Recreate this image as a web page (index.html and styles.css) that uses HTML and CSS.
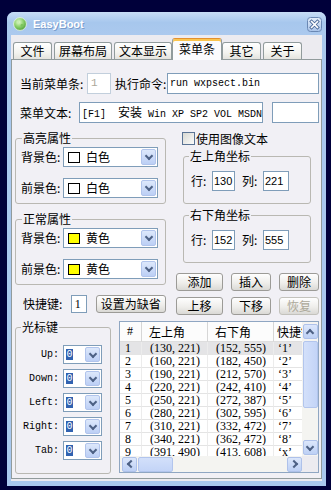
FILE: index.html
```html
<!DOCTYPE html>
<html lang="zh-CN">
<head>
  <meta charset="UTF-8" />
  <meta name="viewport" content="width=device-width, initial-scale=1.0"/>
  <title>EasyBoot</title>
  <link rel="stylesheet" href="styles.css">
</head>
<body>
  <div class="window">
    <div class="titlebar">
      <svg class="app-icon" width="14" height="14" viewBox="0 0 14 14">
        <defs>
          <radialGradient id="ball" cx="40%" cy="35%" r="70%">
            <stop offset="0" stop-color="#e2f8cf"/>
            <stop offset="0.5" stop-color="#8fd36f"/>
            <stop offset="1" stop-color="#4a9c34"/>
          </radialGradient>
        </defs>
        <circle cx="7" cy="7" r="6.4" fill="url(#ball)" stroke="#eef7e6" stroke-width="0.8"/>
        <circle cx="5" cy="5" r="1.2" fill="#c7eeb0"/>
        <circle cx="9" cy="8.5" r="1.4" fill="#7cc35c"/>
      </svg>
      <span class="title">EasyBoot</span>
      <svg class="close-btn" width="15" height="15" viewBox="0 0 15 15">
        <defs>
          <linearGradient id="closeBg" x1="0" y1="0" x2="0" y2="1">
            <stop offset="0" stop-color="#e6effb"/>
            <stop offset="1" stop-color="#a8c3e9"/>
          </linearGradient>
        </defs>
        <rect x="0.5" y="0.5" width="14" height="14" rx="3" fill="url(#closeBg)" stroke="#6a88b4"/>
        <path d="M4.6 4.6 L10.4 10.4 M10.4 4.6 L4.6 10.4" stroke="#4b6a98" stroke-width="3.4" stroke-linecap="square"/>
        <path d="M4.6 4.6 L10.4 10.4 M10.4 4.6 L4.6 10.4" stroke="#fff" stroke-width="1.6" stroke-linecap="square"/>
      </svg>
    </div>

    <div class="client">
      <div class="tabs">
        <div class="tab">文件</div>
        <div class="tab">屏幕布局</div>
        <div class="tab">文本显示</div>
        <div class="tab active">菜单条</div>
        <div class="tab">其它</div>
        <div class="tab">关于</div>
      </div>

      <div class="panel">
        <div class="field-row">
          <span class="lbl lbl-current">当前菜单条:</span>
          <div class="edit edit-index">1</div>
          <span class="lbl lbl-cmd">执行命令:</span>
          <div class="edit mono edit-cmd">run wxpsect.bin</div>
        </div>
        <div class="field-row">
          <span class="lbl lbl-text">菜单文本:</span>
          <div class="edit mono edit-text">[F1]  <span class="cjk">安装</span> Win XP SP2 VOL MSDN</div>
          <div class="edit edit-extra"></div>
        </div>

        <div class="middle">
          <div class="col-left">
            <fieldset class="group attr">
              <legend>高亮属性</legend>
              <div class="attr-row">
                <span class="lbl">背景色:</span>
                <div class="combo"><span class="swatch"></span><span class="combo-text">白色</span><span class="drop"></span></div>
              </div>
              <div class="attr-row">
                <span class="lbl">前景色:</span>
                <div class="combo"><span class="swatch"></span><span class="combo-text">白色</span><span class="drop"></span></div>
              </div>
            </fieldset>
            <fieldset class="group attr">
              <legend>正常属性</legend>
              <div class="attr-row">
                <span class="lbl">背景色:</span>
                <div class="combo"><span class="swatch yellow"></span><span class="combo-text">黄色</span><span class="drop"></span></div>
              </div>
              <div class="attr-row">
                <span class="lbl">前景色:</span>
                <div class="combo"><span class="swatch yellow"></span><span class="combo-text">黄色</span><span class="drop"></span></div>
              </div>
            </fieldset>
            <div class="hotkey-row">
              <span class="lbl">快捷键:</span>
              <div class="edit edit-hotkey">1</div>
              <button class="btn btn-default">设置为缺省</button>
            </div>
          </div>

          <div class="col-right">
            <div class="check-row"><span class="checkbox"></span>使用图像文本</div>
            <fieldset class="group coords">
              <legend>左上角坐标</legend>
              <div class="coord-row">
                <span class="lbl">行:</span><div class="edit num">130</div>
                <span class="lbl lbl-col">列:</span><div class="edit num wide">221</div>
              </div>
            </fieldset>
            <fieldset class="group coords">
              <legend>右下角坐标</legend>
              <div class="coord-row">
                <span class="lbl">行:</span><div class="edit num">152</div>
                <span class="lbl lbl-col">列:</span><div class="edit num wide">555</div>
              </div>
            </fieldset>
            <div class="btn-grid">
              <button class="btn">添加</button>
              <button class="btn">插入</button>
              <button class="btn">删除</button>
              <button class="btn">上移</button>
              <button class="btn">下移</button>
              <button class="btn" disabled>恢复</button>
            </div>
          </div>
        </div>

        <div class="bottom">
          <fieldset class="group cursor-keys">
            <legend>光标键</legend>
            <div class="key-row"><span class="key-lbl">Up:</span><div class="combo small"><span class="key-sel">0</span><span class="drop"></span></div></div>
            <div class="key-row"><span class="key-lbl">Down:</span><div class="combo small"><span class="key-sel">0</span><span class="drop"></span></div></div>
            <div class="key-row"><span class="key-lbl">Left:</span><div class="combo small"><span class="key-sel">0</span><span class="drop"></span></div></div>
            <div class="key-row"><span class="key-lbl">Right:</span><div class="combo small"><span class="key-sel">0</span><span class="drop"></span></div></div>
            <div class="key-row"><span class="key-lbl">Tab:</span><div class="combo small"><span class="key-sel">0</span><span class="drop"></span></div></div>
          </fieldset>

          <div class="list">
            <div class="list-view">
              <div class="lv-row lv-head"><span>#</span><span>左上角</span><span>右下角</span><span>快捷键</span></div>
              <div class="lv-row sel"><span>1</span><span>(130, 221)</span><span>(152, 555)</span><span>‘1’</span></div>
              <div class="lv-row"><span>2</span><span>(160, 221)</span><span>(182, 450)</span><span>‘2’</span></div>
              <div class="lv-row"><span>3</span><span>(190, 221)</span><span>(212, 570)</span><span>‘3’</span></div>
              <div class="lv-row"><span>4</span><span>(220, 221)</span><span>(242, 410)</span><span>‘4’</span></div>
              <div class="lv-row"><span>5</span><span>(250, 221)</span><span>(272, 387)</span><span>‘5’</span></div>
              <div class="lv-row"><span>6</span><span>(280, 221)</span><span>(302, 595)</span><span>‘6’</span></div>
              <div class="lv-row"><span>7</span><span>(310, 221)</span><span>(332, 472)</span><span>‘7’</span></div>
              <div class="lv-row"><span>8</span><span>(340, 221)</span><span>(362, 472)</span><span>‘8’</span></div>
              <div class="lv-row"><span>9</span><span>(391, 490)</span><span>(413, 608)</span><span>‘x’</span></div>
            </div>
            <div class="vscroll">
              <span class="sb-btn up"></span>
              <span class="sb-thumb v"></span>
              <span class="sb-space"></span>
              <span class="sb-btn down"></span>
            </div>
            <div class="hscroll">
              <span class="sb-btn left"></span>
              <span class="sb-thumb h"></span>
              <span class="sb-space"></span>
              <span class="sb-btn right"></span>
            </div>
            <div class="corner"></div>
          </div>
        </div>
      </div>
    </div>
  </div>
</body>
</html>
```

FILE: styles.css
```css
body {
  margin: 0;
  background: #00003a;
  font: 12px/14px "Noto Sans CJK SC", sans-serif;
  color: #000;
}
.window {
  margin: 12px 0 0 7px;
  width: 319px;
  height: 474px;
  box-sizing: border-box;
  padding: 0 4px 5px;
  background: #a9c8ee;
  border-radius: 7px 7px 0 0;
  display: flex;
  flex-direction: column;
}
.titlebar {
  height: 23px;
  margin: 0 -4px;
  padding: 0 4px 0 6px;
  display: flex;
  align-items: center;
  border-radius: 7px 7px 0 0;
  background: linear-gradient(#c8ddf6, #a7c7ed 45%, #abc9ee);
}
.app-icon {
  margin-top: 1px;
}
.title {
  margin-left: 6px;
  font: bold 11px "Liberation Sans", sans-serif;
  color: #fff;
  text-shadow: 1px 1px 0 rgba(60, 100, 160, 0.45);
}
.close-btn {
  margin-left: auto;
  margin-top: 2px;
}
.client {
  flex: 1;
  padding-top: 7px;
  background: #ecebf0;
}

/* tabs */
.tabs {
  display: flex;
  align-items: flex-end;
  gap: 2px;
  height: 17px;
  padding-left: 2px;
  position: relative;
  z-index: 1;
}
.tab {
  height: 17px;
  min-width: 39px;
  box-sizing: border-box;
  padding: 0 4px;
  border: 1px solid #919b9c;
  border-bottom: none;
  border-radius: 3px 3px 0 0;
  background: linear-gradient(#fff, #f3f3ef 60%, #e4e3de);
  text-align: center;
  line-height: 16px;
}
.tab.active {
  height: 22px;
  margin: 0 -2px -1px;
  padding: 0 6px;
  line-height: 19px;
  border-top-color: #e3912f;
  box-shadow: inset 0 2px 0 #fbc54e;
  background: #fbfbfd;
}
.panel {
  height: 420px;
  box-sizing: border-box;
  padding: 13px 2px 0 3px;
  border: 1px solid #919b9c;
  background: #f1f0f5;
}

/* edits */
.lbl {
  white-space: nowrap;
}
.edit {
  box-sizing: border-box;
  height: 21px;
  border: 1px solid #7f9db9;
  background: #fff;
  white-space: pre;
  overflow: hidden;
}
.mono {
  padding-left: 2px;
  font: 10px/19px "Liberation Mono", monospace;
}
.cjk {
  font: 12px "Noto Sans CJK SC", sans-serif;
}
.field-row {
  display: flex;
  align-items: center;
  height: 21px;
  padding-left: 5px;
}
.field-row + .field-row {
  margin-top: 8px;
}
.lbl-current {
  width: 66px;
}
.edit-index {
  width: 24px;
  margin-left: 1px;
  padding-left: 3px;
  border-color: #c2cfdc;
  color: #aca899;
  font: 11px/19px "Liberation Mono", monospace;
}
.lbl-cmd {
  width: 52px;
  margin-left: 4px;
}
.edit-cmd {
  flex: 1;
}
.lbl-text {
  width: 59px;
}
.edit-text {
  width: 184px;
}
.edit-extra {
  width: 47px;
  margin-left: 9px;
}

/* group boxes */
.middle {
  display: flex;
  gap: 10px;
  margin-top: 9px;
}
.col-left {
  width: 151px;
}
.col-right {
  width: 143px;
}
.group {
  margin: 0;
  min-width: 0;
  box-sizing: border-box;
  border: 1px solid #b9b8b2;
  border-radius: 3px;
}
.group legend {
  padding: 0 1px;
  margin-left: 1px;
  font-size: 12px;
  line-height: 12px;
}
.attr {
  padding: 3px 7px 5px 5px;
}
.attr + .attr {
  margin-top: 9px;
}
.attr-row {
  display: flex;
  align-items: center;
  height: 20px;
}
.attr-row + .attr-row {
  margin-top: 11px;
}
.attr-row .lbl {
  width: 42px;
}

/* combo boxes */
.combo {
  display: flex;
  align-items: center;
  width: 95px;
  height: 20px;
  box-sizing: border-box;
  border: 1px solid #7f9db9;
  background: #fff;
}
.swatch {
  width: 12px;
  height: 11px;
  box-sizing: border-box;
  margin-left: 4px;
  border: 1px solid #000;
  background: #fff;
}
.swatch.yellow {
  background: #ffff00;
}
.combo-text {
  margin-left: 6px;
}
.drop {
  margin-left: auto;
  margin-right: 1px;
  width: 15px;
  height: 16px;
  box-sizing: border-box;
  border: 1px solid #b1c4ec;
  border-radius: 2px;
  background: linear-gradient(#dde8fb, #bccff5);
  display: flex;
  align-items: center;
  justify-content: center;
}
.drop::after {
  content: "";
  width: 4px;
  height: 4px;
  border: solid #4d6185;
  border-width: 0 2px 2px 0;
  transform: translateY(-1px) rotate(45deg);
}
.combo.small {
  width: 39px;
  height: 19px;
  margin-left: 4px;
}
.combo.small .drop {
  height: 15px;
}
.key-sel {
  margin-left: 2px;
  width: 7px;
  height: 11px;
  background: #3162b0;
  color: #fff;
  font: 10px/11px "Liberation Mono", monospace;
  text-align: center;
}

/* hotkey + buttons */
.hotkey-row {
  display: flex;
  align-items: center;
  height: 18px;
  margin-top: 10px;
  padding-left: 8px;
}
.hotkey-row .lbl {
  width: 48px;
}
.edit-hotkey {
  width: 16px;
  height: 18px;
  padding-left: 3px;
  font: 12px/16px "Liberation Serif", serif;
}
.btn {
  height: 18px;
  box-sizing: border-box;
  padding: 0;
  border: 1px solid #9c9b97;
  border-radius: 3px;
  background: linear-gradient(#fefefe, #efeeeb 55%, #dad9d5);
  color: #000;
  font: 12px/16px "Noto Sans CJK SC", sans-serif;
}
.btn:disabled {
  color: #aca899;
  border-color: #c3c2bc;
}
.btn-default {
  width: 71px;
  margin-left: 9px;
}

/* right column */
.check-row {
  display: flex;
  align-items: center;
  gap: 1px;
  height: 13px;
  margin-left: 6px;
}
.checkbox {
  width: 13px;
  height: 13px;
  box-sizing: border-box;
  border: 1px solid #5a7394;
  background: linear-gradient(135deg, #d8d8d2, #fbfbfa);
}
.coords {
  margin: 5px 8px 0 7px;
  padding: 9px 0 12px 7px;
}
.coords legend {
  margin-left: -2px;
}
.coord-row {
  display: flex;
  align-items: center;
  height: 20px;
}
.coord-row .lbl {
  width: 18px;
}
.coord-row .lbl-col {
  margin-left: 7px;
}
.num {
  width: 23px;
  height: 20px;
  margin-left: 3px;
  padding-left: 1px;
  font: 11px/18px "Liberation Sans", sans-serif;
}
.num.wide {
  width: 26px;
}
.btn-grid {
  display: grid;
  grid-template-columns: 47px 40px 40px;
  column-gap: 8px;
  row-gap: 6px;
  margin-top: 10px;
}

/* bottom */
.bottom {
  display: flex;
  align-items: flex-start;
  gap: 8px;
  margin-top: 6px;
}
.cursor-keys {
  width: 96px;
  padding: 12px 0 13px 0;
}
.cursor-keys legend {
  margin-left: 5px;
}
.key-row {
  display: flex;
  align-items: center;
  height: 19px;
}
.key-row + .key-row {
  margin-top: 5px;
}
.key-lbl {
  width: 43px;
  text-align: right;
  font: 10px "Liberation Mono", monospace;
}

/* list view */
.list {
  width: 200px;
  height: 152px;
  box-sizing: border-box;
  border: 1px solid #8fa6c2;
  background: #fff;
  display: grid;
  grid-template-columns: 1fr 16px;
  grid-template-rows: 1fr 16px;
}
.list-view {
  overflow: hidden;
}
.lv-row {
  display: grid;
  grid-template-columns: 22px 66px 66px 60px;
  width: 214px;
  height: 13px;
  font: 12px/12px "Liberation Serif", serif;
}
.lv-row > span {
  box-sizing: border-box;
  overflow: hidden;
  white-space: nowrap;
  border-right: 1px solid #ececec;
  border-bottom: 1px solid #e4e4e4;
}
.lv-row > span:nth-child(1) {
  padding-left: 5px;
}
.lv-row > span:nth-child(2),
.lv-row > span:nth-child(3) {
  padding-left: 8px;
}
.lv-row > span:nth-child(4) {
  padding-left: 4px;
}
.lv-head {
  height: 20px;
  font: 12px/19px "Noto Sans CJK SC", sans-serif;
}
.lv-head > span {
  padding-left: 7px;
  background: #fcfcfc;
  border-right-color: #d6d6d6;
  border-bottom-color: #dedede;
}
.lv-head > span:first-child {
  font: 12px/19px "Liberation Serif", serif;
  padding-left: 7px;
}
.lv-head > span:nth-child(2),
.lv-head > span:nth-child(3) {
  padding-left: 7px;
}
.lv-head > span:nth-child(4) {
  padding-left: 3px;
}
.lv-row.sel > span {
  background: #e4e4e6;
}

/* scroll bars */
.vscroll,
.hscroll {
  display: flex;
  background: #f4f4f1;
}
.vscroll {
  flex-direction: column;
  align-items: center;
}
.hscroll {
  align-items: center;
}
.sb-space {
  flex: 1;
}
.sb-btn {
  width: 15px;
  height: 15px;
  box-sizing: border-box;
  border: 1px solid #aec1ea;
  border-radius: 2px;
  background: linear-gradient(#dce7fb, #bdd0f5);
  display: flex;
  align-items: center;
  justify-content: center;
}
.sb-btn::after {
  content: "";
  width: 4px;
  height: 4px;
  border: solid #4d6185;
  border-width: 0 2px 2px 0;
}
.sb-btn.up {
  margin-top: 2px;
}
.sb-btn.up::after {
  transform: translateY(1px) rotate(-135deg);
}
.sb-btn.down {
  margin-bottom: 1px;
}
.sb-btn.down::after {
  transform: translateY(-1px) rotate(45deg);
}
.sb-btn.left {
  margin-left: 2px;
}
.sb-btn.left::after {
  transform: translateX(1px) rotate(135deg);
}
.sb-btn.right::after {
  transform: translateX(-1px) rotate(-45deg);
}
.sb-thumb {
  box-sizing: border-box;
  border: 1px solid #b2c5ed;
  border-radius: 2px;
}
.sb-thumb.v {
  width: 15px;
  height: 67px;
  margin-top: 2px;
  background: linear-gradient(90deg, #d3e0fa, #c3d4f7);
}
.sb-thumb.h {
  width: 35px;
  height: 15px;
  margin-left: 1px;
  background: linear-gradient(#d3e0fa, #c3d4f7);
}
.corner {
  background: #ecebf0;
}
```
